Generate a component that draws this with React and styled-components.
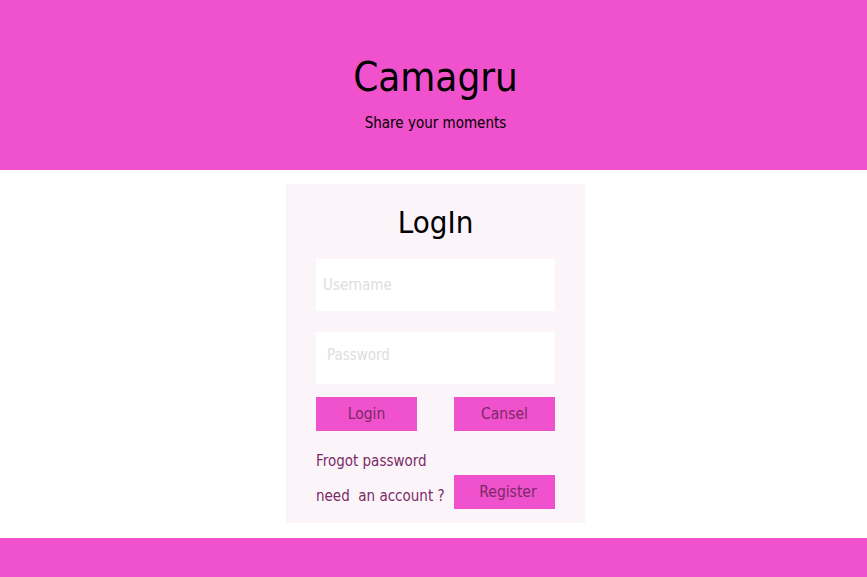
import React from 'react';
import styled, { createGlobalStyle } from 'styled-components';

const GlobalStyle = createGlobalStyle`
  body {
    margin: 0;
    font-family: "DejaVu Sans Condensed", "DejaVu Sans", sans-serif;
    font-stretch: condensed;
    background: #ffffff;
  }
`;

const Page = styled.div`
  display: flex;
  flex-direction: column;
  height: 577px;
`;

const Header = styled.header`
  height: 170px;
  flex-shrink: 0;
  background-color: #f051cc;
  display: flex;
  flex-direction: column;
  align-items: center;
  padding: 50px 0 0 4px;
  box-sizing: border-box;
`;

const Brand = styled.h1`
  margin: 0;
  font-size: 40px;
  font-weight: 400;
  line-height: 54px;
  color: #000;
`;

const Tagline = styled.p`
  margin: 10px 0 0;
  font-size: 15px;
  color: #000;
`;

const Main = styled.main`
  flex: 1;
  display: flex;
  justify-content: center;
  align-items: flex-start;
  padding: 14px 0 15px 4px;
`;

const Card = styled.div`
  width: 299px;
  height: 339px;
  box-sizing: border-box;
  padding: 18px 30px 0;
  background-color: #fbf5fa;
  display: flex;
  flex-direction: column;
`;

const Title = styled.h2`
  margin: 0 0 17px;
  text-align: center;
  font-size: 31px;
  font-weight: 400;
  line-height: 40px;
  color: #000;
`;

const Input = styled.input`
  height: 52px;
  width: 100%;
  flex-shrink: 0;
  box-sizing: border-box;
  border: none;
  outline: none;
  background: #fff;
  padding: 0 ${(p) => p.$pad || 7}px ${(p) => p.$pb || 0}px;
  margin-bottom: ${(p) => p.$gap || 0}px;
  font-family: inherit;
  font-stretch: condensed;
  font-size: 15px;
  &::placeholder {
    color: #e0dde0;
  }
`;

const Row = styled.div`
  display: flex;
  justify-content: space-between;
  align-items: ${(p) => p.$align || 'center'};
  margin-top: ${(p) => p.$top || 0}px;
`;

const Button = styled.button`
  width: 101px;
  height: 34px;
  flex-shrink: 0;
  border: none;
  padding: 0 0 0 ${(p) => p.$shift || 0}px;
  background-color: #f051cc;
  color: #7a2a66;
  font-family: inherit;
  font-stretch: condensed;
  font-size: 15.5px;
  cursor: pointer;
`;

const Links = styled.div`
  display: flex;
  flex-direction: column;
  gap: 16px;
  padding-bottom: 3px;
`;

const LinkText = styled.a`
  color: #7a2a66;
  font-size: 15px;
  line-height: 19px;
  white-space: nowrap;
  text-decoration: none;
  cursor: pointer;
`;

const Footer = styled.footer`
  height: 39px;
  flex-shrink: 0;
  background-color: #f051cc;
`;

export default function App() {
  return (
    <Page>
      <GlobalStyle />
      <Header>
        <Brand>Camagru</Brand>
        <Tagline>Share your moments</Tagline>
      </Header>
      <Main>
        <Card>
          <Title>LogIn</Title>
          <Input placeholder="Username" $gap={21} />
          <Input type="password" placeholder="Password" $pad={11} $pb={6} />
          <Row $top={13}>
            <Button>Login</Button>
            <Button>Cansel</Button>
          </Row>
          <Row $top={21} $align="flex-end">
            <Links>
              <LinkText>Frogot password</LinkText>
              <LinkText>need&nbsp; an account ?</LinkText>
            </Links>
            <Button $shift={7}>Register</Button>
          </Row>
        </Card>
      </Main>
      <Footer />
    </Page>
  );
}
